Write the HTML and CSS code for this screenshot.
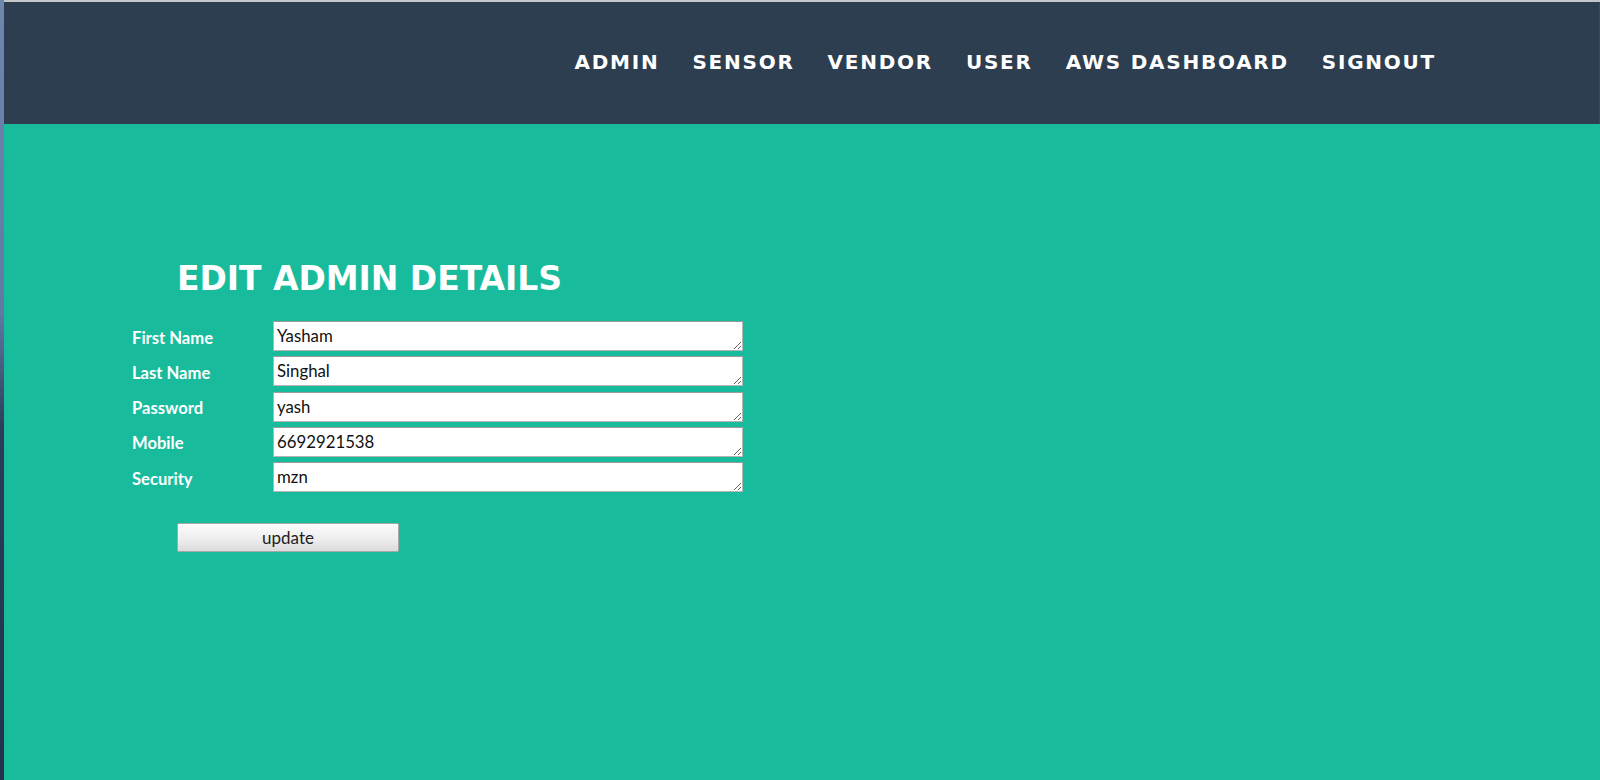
FILE: index.html
```html
<!DOCTYPE html>
<html lang="en">
<head>
<meta charset="utf-8">
<title>Edit Admin Details</title>
<link rel="stylesheet" href="styles.css">
</head>
<body>
<div class="window">
  <div class="strip"></div>
  <div class="page">
    <header class="navbar">
      <nav class="nav">
        <a href="#">ADMIN</a>
        <a href="#">SENSOR</a>
        <a href="#">VENDOR</a>
        <a href="#">USER</a>
        <a href="#">AWS DASHBOARD</a>
        <a href="#">SIGNOUT</a>
      </nav>
    </header>
    <main class="content">
      <h1 class="title">EDIT ADMIN DETAILS</h1>
      <form class="form">
        <div class="row"><label class="label">First Name</label><textarea class="field" rows="1">Yasham</textarea></div>
        <div class="row"><label class="label">Last Name</label><textarea class="field" rows="1">Singhal</textarea></div>
        <div class="row"><label class="label">Password</label><textarea class="field" rows="1">yash</textarea></div>
        <div class="row"><label class="label">Mobile</label><textarea class="field" rows="1">6692921538</textarea></div>
        <div class="row"><label class="label">Security</label><textarea class="field" rows="1">mzn</textarea></div>
        <button type="button" class="btn">update</button>
      </form>
    </main>
  </div>
</div>
</body>
</html>
```

FILE: styles.css
```css
html, body {
  margin: 0;
  padding: 0;
  height: 100%;
  background: #18bc9c;
}

.window {
  display: flex;
  height: 780px;
  overflow: hidden;
}

.strip {
  width: 4px;
  flex: 0 0 4px;
  background: linear-gradient(to bottom, #6f86ad 0%, #5f7aa6 40%, #2b3c58 55%, #22324c 100%);
}

.page {
  flex: 1;
  display: flex;
  flex-direction: column;
  border-top: 2px solid #c4c6c9;
  background: #18bc9c;
}

.navbar {
  height: 122px;
  background: #2c3e50;
  display: flex;
  align-items: center;
  justify-content: flex-end;
  padding-right: 164px;
  box-shadow: inset -1px 0 0 #3a4a5c;
}

.nav {
  display: flex;
  gap: 33px;
  margin-top: -3px;
}

.nav a {
  font-family: "DejaVu Sans", sans-serif;
  font-weight: 700;
  font-size: 20px;
  letter-spacing: 1.75px;
  color: #ffffff;
  text-decoration: none;
}

.content {
  flex: 1;
  padding: 135px 0 0 128px;
  font-family: Lato, "Noto Sans", sans-serif;
}

.title {
  margin: 0 0 22px 45px;
  font-family: "DejaVu Sans", sans-serif;
  font-weight: 700;
  font-size: 33px;
  line-height: 40px;
  letter-spacing: -0.05px;
  color: #ffffff;
}

.form {
  display: flex;
  flex-direction: column;
}

.row {
  display: flex;
  align-items: flex-start;
  margin-bottom: 5.3px;
}

.label {
  width: 141px;
  padding-top: 7.5px;
  font-family: Lato, sans-serif;
  font-weight: 700;
  font-size: 16.6px;
  line-height: 19px;
  color: #ffffff;
}

.field {
  box-sizing: border-box;
  width: 470px;
  height: 30px;
  margin: 0;
  padding: 4px 3px 0;
  border: 1px solid #b5b5b5;
  border-top-color: #9a9a9a;
  background: #ffffff;
  font-family: Lato, sans-serif;
  font-size: 16.8px;
  line-height: 19px;
  color: #111111;
  overflow: hidden;
}

.btn {
  align-self: flex-start;
  margin: 26px 0 0 45px;
  box-sizing: border-box;
  width: 222px;
  height: 29px;
  border: 1px solid #a8a8a8;
  border-radius: 1px;
  background: linear-gradient(to bottom, #fbfbfb 0%, #eeeeee 55%, #dcdcdc 100%);
  font-family: Lato, sans-serif;
  font-size: 17px;
  color: #222222;
  padding: 0;
}
```
